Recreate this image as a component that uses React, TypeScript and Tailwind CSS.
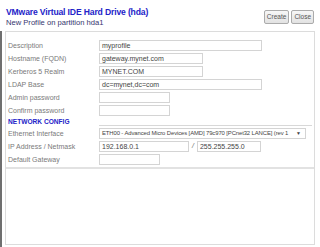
import React from "react";

const label = "text-[7px] text-[#7a7a7a] leading-none";
const box =
  "h-[11px] border border-[#d4d4d4] bg-white text-[#444] leading-[9px] px-[2px] flex items-center";

function Row({ name, h = "h-[13px]", children }: { name: string; h?: string; children?: React.ReactNode }) {
  return (
    <div className={`flex items-center ${h}`}>
      <div className={`w-[91px] ${label}`}>{name}</div>
      {children}
    </div>
  );
}

const btn =
  "h-[14px] px-[2px] text-[6.5px] text-[#555] bg-gradient-to-b from-[#f7f7f7] to-[#e2e2e2] border border-[#ababab] rounded-[2px] leading-none";

export default function App() {
  return (
    <div
      className="w-[320px] h-[247px] bg-white flex flex-col overflow-hidden"
      style={{ fontFamily: '"Liberation Sans", Arial, sans-serif' }}
    >
      {/* Header */}
      <div className="flex justify-between items-start pl-[6px] pr-[6px] pt-[7px] h-[31px]">
        <div>
          <div className="text-[8.6px] font-bold text-[#2323c8] leading-[11px] tracking-[-0.15px]">
            VMware Virtual IDE Hard Drive (hda)
          </div>
          <div className="text-[7.6px] text-[#35356e] leading-[10px]">New Profile on partition hda1</div>
        </div>
        <div className="flex gap-[2px] mt-[3px]">
          <button className={btn}>Create</button>
          <button className={btn}>Close</button>
        </div>
      </div>

      {/* Body */}
      <div className="flex-1 flex border-l-2 border-[#6f6f6f]">
        <div className="flex-1 ml-[3px] mr-[5px] mb-[2px] border border-[#dcdcdc] pt-[7px] pl-[2px]">
          <Row name="Description">
            <div className={`${box} w-[163px] text-[7px]`}>myprofile</div>
          </Row>
          <Row name="Hostname (FQDN)">
            <div className={`${box} w-[104px] text-[7px]`}>gateway.mynet.com</div>
          </Row>
          <Row name="Kerberos 5 Realm">
            <div className={`${box} w-[104px] text-[7px]`}>MYNET.COM</div>
          </Row>
          <Row name="LDAP Base">
            <div className={`${box} w-[163px] text-[7px]`}>dc=mynet,dc=com</div>
          </Row>
          <Row name="Admin password">
            <div className={`${box} w-[71px]`}></div>
          </Row>
          <Row name="Confirm password">
            <div className={`${box} w-[71px]`}></div>
          </Row>

          <div className="flex items-end h-[9px]">
            <div className="w-[91px] text-[6.6px] font-bold text-[#2323c8] leading-none">NETWORK CONFIG</div>
            <div className="flex-1 border-b border-[#d8d8d8] mr-[2px]"></div>
          </div>

          <Row name="Ethernet Interface" h="h-[14px]">
            <div className={`${box} w-[207px] justify-between`}>
              <span className="whitespace-nowrap text-[5.9px] tracking-[-0.1px]">
                ETH00 - Advanced Micro Devices [AMD] 79c970 [PCnet32 LANCE] (rev 1
              </span>
              <span className="text-[5px] text-[#444] mr-[2px]">▼</span>
            </div>
          </Row>
          <Row name="IP Address / Netmask">
            <div className={`${box} w-[90px] text-[7px]`}>192.168.0.1</div>
            <span className="text-[7px] text-[#666] mx-[3px] italic">/</span>
            <div className={`${box} w-[64px] text-[7px]`}>255.255.255.0</div>
          </Row>
          <Row name="Default Gateway" h="h-[12px]">
            <div className={`${box} w-[61px]`}></div>
          </Row>
          <div className="mt-[2px] -ml-[2px] border-b-2 border-[#e2e2e2]"></div>
        </div>
      </div>
    </div>
  );
}
